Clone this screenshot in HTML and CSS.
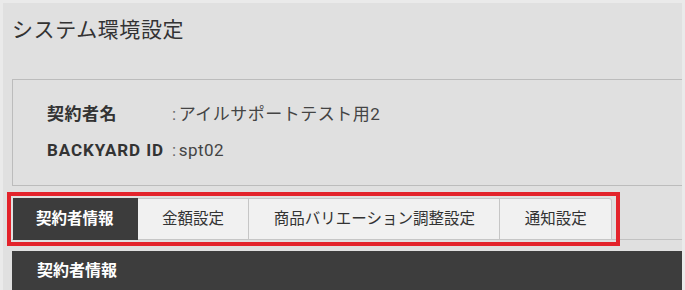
FILE: index.html
```html
<!DOCTYPE html>
<html lang="ja">
<head>
<meta charset="utf-8">
<link rel="stylesheet" href="styles.css">
</head>
<body>
<div class="panel">
  <h1 class="title">システム環境設定</h1>
  <div class="info">
    <div class="row"><span class="label">契約者名</span><span class="value"><span class="colon">:</span>アイルサポートテスト用2</span></div>
    <div class="row"><span class="label latin">BACKYARD ID</span><span class="value"><span class="colon">:</span><span class="latin-v">spt02</span></span></div>
  </div>
  <div class="tabbar">
    <div class="tabs">
      <div class="tab active">契約者情報</div>
      <div class="tab">金額設定</div>
      <div class="tab">商品バリエーション調整設定</div>
      <div class="tab last">通知設定</div>
    </div>
  </div>
  <div class="section-head">契約者情報</div>
</div>
</body>
</html>
```
FILE: styles.css
```css
html, body {
  margin: 0;
  padding: 0;
}
body {
  background: #eaeaea;
  font-family: Roboto, "Noto Sans CJK JP", sans-serif;
  color: #333;
  height: 290px;
  overflow: hidden;
}
.panel {
  margin: 3px 3px 0 3px;
  background: #e0e0e0;
  padding: 0 0 0 9px;
  height: 287px;
  overflow: hidden;
}
.title {
  margin: 0 0 35px 0;
  padding-top: 13px;
  font-size: 21px;
  line-height: 28px;
  font-weight: normal;
  color: #333;
  letter-spacing: 0.6px;
}
.info {
  border: 1px solid #bcbcbc;
  border-right: none;
  padding: 21px 0 22px 34px;
  display: flex;
  flex-direction: column;
  gap: 10px;
}
.row {
  display: flex;
  line-height: 26px;
  font-size: 17px;
}
.label {
  width: 125px;
  font-weight: bold;
  color: #333;
  letter-spacing: 0.5px;
}
.label.latin {
  letter-spacing: 0.9px;
}
.value {
  color: #444;
  letter-spacing: 0.5px;
}
.colon {
  color: #666;
  margin-right: 2px;
}
.tabbar {
  margin-top: 12px;
  border-bottom: 1px solid #c2c2c2;
  padding-left: 1px;
  display: flex;
}
.tabs {
  position: relative;
  display: flex;
  height: 42px;
  margin-bottom: -1px;
}
.tabs::after {
  content: "";
  position: absolute;
  left: -6px;
  top: -6px;
  right: -8px;
  bottom: -6px;
  border: 4px solid #e3232b;
  pointer-events: none;
}
.tab {
  box-sizing: border-box;
  height: 42px;
  line-height: 40px;
  padding: 0 24.4px;
  font-size: 15.5px;
  background: #f1f1f1;
  border: 1px solid #c6c6c6;
  border-left: none;
  color: #333;
}
.tab.active {
  background: #3c3c3c;
  border-color: #3c3c3c;
  color: #fff;
  font-weight: bold;
  padding: 0 23px;
}
.tab.last {
  border-top-right-radius: 3px;
}
.section-head {
  margin-top: 11px;
  background: #3d3d3d;
  color: #fff;
  font-weight: bold;
  font-size: 16px;
  line-height: 40px;
  height: 60px;
  padding-left: 25px;
}
```
